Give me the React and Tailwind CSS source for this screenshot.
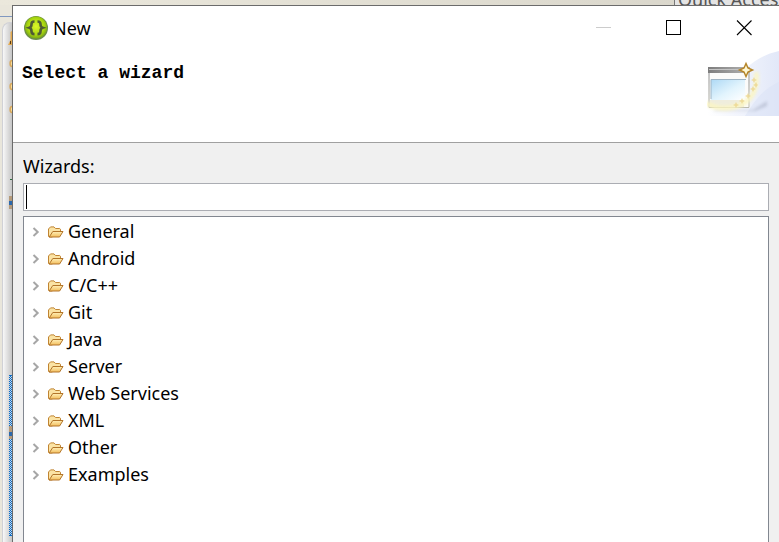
import React, { useState } from 'react';

const WIZARDS = [
  'General',
  'Android',
  'C/C++',
  'Git',
  'Java',
  'Server',
  'Web Services',
  'XML',
  'Other',
  'Examples',
];

function AppIcon() {
  return (
    <svg className="h-6 w-6 shrink-0" viewBox="0 0 24 24" aria-hidden="true">
      <defs>
        <radialGradient id="app-green" cx="50%" cy="45%" r="55%">
          <stop offset="0" stopColor="#dcf52a" />
          <stop offset="0.7" stopColor="#a9d610" />
          <stop offset="1" stopColor="#78a716" />
        </radialGradient>
      </defs>
      <circle cx="12" cy="12" r="12" fill="#6d8d4c" />
      <circle cx="12" cy="11.5" r="11" fill="url(#app-green)" />
      <path
        d="M10.500 5.500c-2.600 0-3 1-3 2.600 0 1.900.1 3-2 3.700 2.100.7 2 1.800 2 3.700 0 1.600.4 2.600 3 2.600"
        fill="none"
        stroke="#4f5b35"
        strokeWidth="2.600"
      />
      <path
        d="M13.500 5.500c2.600 0 3 1 3 2.600 0 1.900-.1 3 2 3.700-2.100.7-2 1.800-2 3.700 0 1.600-.4 2.600-3 2.600"
        fill="none"
        stroke="#4f5b35"
        strokeWidth="2.600"
      />
    </svg>
  );
}

function FolderIcon() {
  return (
    <svg className="h-3 w-4 shrink-0" viewBox="0 0 16 12" aria-hidden="true">
      <defs>
        <linearGradient id="folder-front" x1="0" y1="0" x2="0" y2="1">
          <stop offset="0" stopColor="#fff0b8" />
          <stop offset="1" stopColor="#f3bd5c" />
        </linearGradient>
      </defs>
      <path
        d="M.5 10.500v-7.500L2.500 .900h3.500l1.500 1.600h4.200l.8.800v2.200l-8.500 5.500H1z"
        fill="#fbe3a4"
        stroke="#c08432"
      />
      <path d="M4.800 5.500h10.200l-3.400 5.500H1.200z" fill="url(#folder-front)" stroke="#b3752a" />
    </svg>
  );
}

function WizardBanner() {
  return (
    <svg className="h-[68px] w-[72px] shrink-0" viewBox="0 0 72 68" aria-hidden="true">
      <defs>
        <linearGradient id="banner-sky" x1="0" y1="0" x2="1" y2="0">
          <stop offset="0" stopColor="#fff" />
          <stop offset="0.5" stopColor="#f0f3fc" />
          <stop offset="1" stopColor="#e2e8f8" />
        </linearGradient>
        <linearGradient id="banner-bar" x1="0" y1="0" x2="1" y2="0">
          <stop offset="0" stopColor="#7d7d7d" />
          <stop offset="1" stopColor="#b4b4b4" />
        </linearGradient>
        <linearGradient id="banner-pane" x1="0" y1="0" x2="1" y2="1">
          <stop offset="0" stopColor="#aed9f5" />
          <stop offset="0.55" stopColor="#e2f4fd" />
          <stop offset="1" stopColor="#fff" />
        </linearGradient>
        <linearGradient id="banner-side" x1="0" y1="0" x2="0" y2="1">
          <stop offset="0" stopColor="#8e8e8e" />
          <stop offset="1" stopColor="#b9b9ae" />
        </linearGradient>
        <filter id="banner-soft" x="-30%" y="-30%" width="160%" height="160%">
          <feGaussianBlur stdDeviation="1.500" />
        </filter>
      </defs>
      <path d="M0 67V52C24 44 34 10 72 2v65z" fill="url(#banner-sky)" />
      <path d="M38 67c8-12 16-26 34-34v34z" fill="#d9e1f5" opacity="0.5" />
      <path d="M6 61h40l14-9v5l-12 5H8z" fill="#9ba3b8" opacity="0.45" filter="url(#banner-soft)" />
      <rect x="2" y="18" width="41" height="41" fill="#fbfbfa" />
      <rect x="1" y="18" width="42" height="6" fill="url(#banner-bar)" />
      <path d="M2 20.500h40" stroke="#c4c4c4" />
      <rect x="4" y="31" width="34" height="20" fill="url(#banner-pane)" />
      <path d="M4 50V30.500h35" fill="none" stroke="#9fb4c4" />
      <path d="M3 51h34v7H3z" fill="#efeddd" />
      <path d="M2 24v34.500h40V24" fill="none" stroke="url(#banner-side)" />
      <path
        d="M-1 54c14 9 42 7 49-14 2-6 2-11 1-17"
        fill="none"
        stroke="#fcf6c2"
        strokeWidth="5"
        opacity="0.85"
        filter="url(#banner-soft)"
      />
      <g fill="#ecd58a" opacity="0.75">
        <path d="M46 30l1-2 1 2 2 1-2 1-1 2-1-2-2-1z" />
        <path d="M45 39l1-2 1 2 2 1-2 1-1 2-1-2-2-1z" />
        <path d="M40 46l1-2 1 2 2 1-2 1-1 2-1-2-2-1z" />
        <path d="M34 51l1-2 1 2 2 1-2 1-1 2-1-2-2-1z" />
        <path d="M28 55l1-2 1 2 2 1-2 1-1 2-1-2-2-1z" />
        <path d="M48 35l1-2 1 2 1 1-1 1-1 2-1-2-2-1z" />
      </g>
      <path
        d="M39 14.500l2 4.500 4.500 2-4.500 2-2 4.500-2-4.500-4.500-2 4.500-2z"
        fill="#fff8d4"
        stroke="#b58528"
        strokeWidth="1.500"
      />
    </svg>
  );
}

function TitleBar() {
  return (
    <div className="flex h-[43px] items-center pl-[11px]">
      <AppIcon />
      <h1 className="ml-[5px] flex-1 text-[18px] leading-6">New</h1>
      <button type="button" disabled aria-label="Minimize" className="flex h-full w-[70px] items-center justify-center">
        <svg className="h-4 w-4" viewBox="0 0 16 16" shapeRendering="crispEdges">
          <path d="M0 7.500h15" stroke="#ccc" />
        </svg>
      </button>
      <button type="button" aria-label="Maximize" className="flex h-full w-[70px] items-center justify-center">
        <svg className="h-4 w-4" viewBox="0 0 16 16" shapeRendering="crispEdges">
          <path d="M.5.5h14v14H.5z" fill="none" stroke="#000" />
        </svg>
      </button>
      <button type="button" aria-label="Close" className="flex h-full w-[70px] items-center justify-center">
        <svg className="h-4 w-4" viewBox="0 0 16 16">
          <path d="M1 .5l14.500 14.500M15.500 .5L1 15" stroke="#000" strokeWidth="1.100" />
        </svg>
      </button>
    </div>
  );
}

function WizardNode({ name }) {
  const [open, setOpen] = useState(false);

  return (
    <li role="treeitem" aria-expanded={open}>
      <button
        type="button"
        className="flex h-[27px] items-center pl-2 text-[18px] leading-6"
        onClick={() => setOpen(!open)}
      >
        <svg className={open ? 'h-[10px] w-2 rotate-90' : 'h-[10px] w-2'} viewBox="0 0 8 10" aria-hidden="true">
          <path d="M1.500 1l4.200 4-4.200 4" fill="none" stroke="#a6a6a6" strokeWidth="2" />
        </svg>
        <span className="ml-2 mr-1">
          <FolderIcon />
        </span>
        <span className="pb-[2px]">{name}</span>
      </button>
    </li>
  );
}

// Sliver of the workbench's package explorer left of the dialog
function WorkbenchEdge() {
  return (
    <div className="flex w-3 shrink-0 flex-col bg-[#e9e6db] pt-[11px]">
      <div className="h-px bg-[#8098c0]" />
      <div className="ml-[2px] mt-[5px] flex flex-1 flex-col items-end rounded-tl-lg border-l border-t border-[#d0d1d6] bg-linear-to-r from-[#f8f8f8] to-[#c6c6c6] pt-2">
        <svg className="h-4 w-1" viewBox="0 0 4 16" aria-hidden="true">
          <path d="M4 0L2.500 1v8L0 14h4z" fill="#e3a94f" />
          <path d="M2.500 10v3" stroke="#5b3d12" />
        </svg>
        {[0, 1, 2].map((i) => (
          <svg key={i} className="mt-[10px] h-[13px] w-[3px]" viewBox="0 0 3 13" aria-hidden="true">
            <path d="M3 3.500C.5 3.500.5 9.500 3 9.500" fill="#f5dc9c" stroke="#d9a85a" strokeWidth="1.500" />
          </svg>
        ))}
        <div className="mt-[63px] h-px w-[2px] bg-[#2d6b3f]" />
        <div className="mt-4 flex h-[13px] w-[3px] flex-col justify-center bg-[#b59a7a]">
          <div className="h-1 bg-[#2c69ad]" />
        </div>
        <svg className="mt-[166px] h-[161px] w-[3px]" viewBox="0 0 3 161" shapeRendering="crispEdges" aria-hidden="true">
          <defs>
            <pattern id="selection-dither" width="2" height="2" patternUnits="userSpaceOnUse">
              <rect width="2" height="2" fill="#c9d6e2" />
              <rect width="1" height="1" fill="#0a6cc8" />
              <rect x="1" y="1" width="1" height="1" fill="#0a6cc8" />
            </pattern>
          </defs>
          <rect width="3" height="161" fill="url(#selection-dither)" />
          <rect width="3" height="1" fill="#0a6cc8" />
          <rect y="51" width="3" height="13" fill="#b59a7a" />
          <rect y="57" width="3" height="4" fill="#2c69ad" />
          <rect y="160" width="3" height="1" fill="#0a6cc8" />
        </svg>
      </div>
    </div>
  );
}

export default function App() {
  const [filter, setFilter] = useState('');
  const visible = WIZARDS.filter((name) => name.toLowerCase().includes(filter.toLowerCase()));

  return (
    <div className="flex h-screen flex-col overflow-hidden bg-[#dedbd0] font-['Noto_Sans','Open_Sans',sans-serif] text-black">
      <div className="flex h-[5px] shrink-0 items-end justify-end overflow-hidden bg-linear-to-r from-[#ebe8dc] to-[#d8d5ca]">
        <input
          aria-label="Quick Access"
          placeholder="Quick Access"
          className="-mb-[6px] h-6 w-[105px] shrink-0 border-l border-[#777] bg-[#e4e4e4] pl-[3px] text-[18px] leading-6 placeholder:text-[#555]"
        />
      </div>
      <div className="flex min-h-0 flex-1">
        <WorkbenchEdge />
        <main className="flex min-w-0 flex-1 flex-col border-l border-t border-[#6b6b6b] bg-[#f0f0f0]">
          <header className="border-b border-[#a0a0a0] bg-white">
            <TitleBar />
            <div className="flex justify-between pb-[25px] pl-[9px]">
              <h2 className="pt-3 font-['Liberation_Mono',monospace] text-[18px] font-bold leading-6">
                Select a wizard
              </h2>
              <WizardBanner />
            </div>
          </header>
          <div className="flex min-h-0 flex-1 flex-col px-[10px] pt-[11px]">
            <label htmlFor="wizard-filter" className="text-[18px] leading-6">
              Wizards:
            </label>
            <div className="relative mt-[5px]">
              <input
                id="wizard-filter"
                type="text"
                value={filter}
                onChange={(e) => setFilter(e.target.value)}
                className="block h-7 w-full border border-[#abadb3] bg-white px-1 text-[18px] outline-none"
              />
              {filter === '' && (
                <span className="pointer-events-none absolute left-[3px] top-[2px] h-6 w-px bg-black" />
              )}
            </div>
            <ul
              role="tree"
              aria-label="Wizards"
              className="mt-[5px] min-h-0 flex-1 overflow-hidden border border-b-0 border-[#828790] bg-white pt-px"
            >
              {visible.map((name) => (
                <WizardNode key={name} name={name} />
              ))}
            </ul>
          </div>
        </main>
      </div>
    </div>
  );
}
